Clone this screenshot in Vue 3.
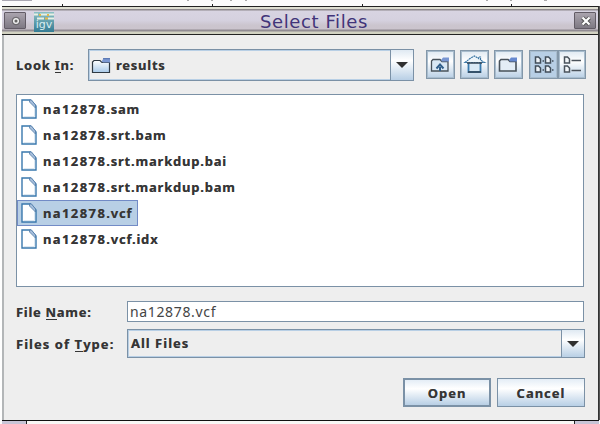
<script setup>
import { ref } from 'vue'
const files = [
  'na12878.sam',
  'na12878.srt.bam',
  'na12878.srt.markdup.bai',
  'na12878.srt.markdup.bam',
  'na12878.vcf',
  'na12878.vcf.idx'
]
const selected = ref('na12878.vcf')
const stem = (file) => file.slice(0, file.indexOf('.'))
const extension = (file) => file.slice(file.indexOf('.'))
</script>

<template>
  <div class="screen">
    <svg class="behind" width="600" height="6" viewBox="0 0 600 6">
      <path d="M2 .5h30" stroke="#aaa8b2" />
      <path d="M62.5 4v2M212.5 4v2M362.5 4v2M511.5 4v2" stroke="#222" />
      <path d="M187 .5h2M211 .5h2M230 .5h2M245 .5h2M486 .5h2M510 .5h2M544 .5h3" stroke="#aaa" />
    </svg>
    <div class="middle">
      <div class="window">
        <header class="titlebar">
          <button class="wm"><svg width="22" height="16" viewBox="0 0 22 16"><circle cx="11" cy="8" r="2.3" fill="#666" stroke="#eee" stroke-width="1.5" /><circle cx="11" cy="8" r="3.8" fill="none" stroke="#555" stroke-width=".7" /></svg></button>
          <span class="logo">
            <svg width="20" height="8" viewBox="0 0 20 8"><path d="M0 2.5h4M6 2.5h14M3 6.5h7M14 6.5h6" stroke="#e7f0e4" stroke-width="2" /><path d="M5 3h2M13 3h2M11 6.5h3" stroke="#e5b94b" stroke-width="2" /></svg>
            <b>igv</b>
          </span>
          <h1>Select Files</h1>
          <button class="wm close"><svg width="22" height="16" viewBox="0 0 22 16"><path d="M7.5 4.7l7 6.8M14.5 4.7l-7 6.8" stroke="#555" stroke-width="4" /><path d="M7.5 4.5l7 7M14.5 4.5l-7 7" stroke="#fff" stroke-width="2.2" /></svg></button>
        </header>
        <main>
          <div class="look">
            <label class="look-label">Look <u>I</u>n:</label>
            <div class="combo location">
              <svg class="folder" width="20" height="17" viewBox="0 0 20 17"><path d="M1.5 15.5V5l1.5-1.5h6l2 2h7.5v10z" fill="url(#folderFill)" stroke="#303a43" stroke-width="1.2" /><path d="M10.5 4.5l2-3H19v4h-7z" fill="#7c98d2" /><path d="M12 1.7h7" stroke="#4a6aac" /><defs><linearGradient id="folderFill" x2="0" y2="1"><stop stop-color="#fff" /><stop offset="1" stop-color="#a9cae9" /></linearGradient></defs></svg>
              <span class="results">results</span>
              <span class="arrow"><svg width="12" height="6" viewBox="0 0 12 6"><path d="M0 0h12L6 6z" fill="#303030" /></svg></span>
            </div>
            <div class="tools">
              <button class="tool"><svg width="27" height="27" viewBox="0 0 27 27"><path d="M4.5 20V10L6 8.5h7l2 2h6V20z" fill="#d9e8f5" stroke="#47515a" stroke-width="1.3" /><path d="M14 9l2-2.5h6v4h-7z" fill="#7896d2" /><path d="M13 20v-4M9.5 17.5L13 13.5l3.5 4" fill="none" stroke="#315f8b" stroke-width="2" /></svg></button>
              <button class="tool"><svg width="27" height="27" viewBox="0 0 27 27"><path d="M7.5 11.5v9.5h12v-9.5" fill="#d9e9f5" stroke="#3879ad" stroke-width="1.8" /><path d="M4 11.5l5-4L13.5 5l4 2.5V6h2v3l4 2.5z" fill="#edf5fa" stroke="#3975a4" stroke-width="1.2" stroke-dasharray="2 .6" /><path d="M6 12h15M7 21h13" stroke="#354655" stroke-width="1.3" /></svg></button>
              <button class="tool"><svg width="27" height="27" viewBox="0 0 27 27"><path d="M4.5 20V10L6 8.5h7l2 2h6V20z" fill="#e3edf6" stroke="#47515a" stroke-width="1.6" /><path d="M14 9l2-2.5h6v4h-7z" fill="#6689cf" /></svg></button>
              <div class="views">
                <button class="tool active"><svg width="27" height="27" viewBox="0 0 27 27"><g fill="#eef3f8" stroke="#414e5a" stroke-width="1.5"><path d="M5.5 6h3l2 2v4h-5zM15.5 6h3l2 2v4h-5zM5.5 15h3l2 2v4h-5zM15.5 15h3l2 2v4h-5z" /></g><path d="M12.5 10h1.5M22 10h1.5M12.5 19h1.5M22 19h1.5" stroke="#414e5a" stroke-width="1.4" /></svg></button>
                <button class="tool list"><svg width="27" height="27" viewBox="0 0 27 27"><path d="M5.5 6h3l2 2v4h-5zM5.5 15h3l2 2v4h-5z" fill="#f4f7fa" stroke="#4a535c" stroke-width="1.5" /><path d="M12.5 9.5H22M12.5 19.5H22" stroke="#4b535b" stroke-width="1.4" /></svg></button>
              </div>
            </div>
          </div>

          <ul class="files">
            <li v-for="file in files" :key="file" :class="{ selected: selected === file }" @click="selected = file">
              <svg width="16" height="20" viewBox="0 0 16 20"><path d="M1 1h8.5L15 7v12H1z" fill="#fff" stroke="#3978ad" stroke-width="1.4" /><path d="M2.5 17.5h11V8" fill="none" stroke="#dce8f2" /><path d="M8.5 1h2l4 5v3L8.5 3z" fill="#a7bedb" stroke="#517ca8" stroke-width=".8" /></svg>
              <span><span class="stem">{{ stem(file) }}</span>{{ extension(file) }}</span>
            </li>
          </ul>

          <div class="row name"><label class="l-name">File <u>N</u>ame:</label><input :value="selected" spellcheck="false" /></div>
          <div class="row type">
            <label class="l-type">Files of <u>T</u>ype:</label>
            <div class="combo"><span class="all">All Files</span><span class="arrow"><svg width="12" height="6" viewBox="0 0 12 6"><path d="M0 0h12L6 6z" fill="#303030" /></svg></span></div>
          </div>
          <footer><button class="action open">Open</button><button class="action">Cancel</button></footer>
        </main>
      </div>
    </div>
    <div class="bottom"><i></i><i></i></div>
  </div>
</template>

<style>
body { overflow: hidden; background: #fbfbfb; }
</style>

<style scoped>
* { box-sizing: border-box; }
.screen { width: 600px; height: 424px; font-family: "Noto Sans", sans-serif; font-size: 13px; font-weight: 700; color: #353535; }
.behind { display: block; height: 6px; background: #fbfbfb; }
.middle { height: 414px; padding-left: 2px; background: linear-gradient(90deg, #fff 2px, #555 2px); }
.window { width: 597px; height: 414px; background: #eee; border-top: 1px solid #222; border-right: 1px solid #333; }
.titlebar { height: 28px; display: flex; align-items: center; border-top: 2px solid #deded1; border-bottom: 1px solid #222; background: linear-gradient(#8e898d 0 1px, #d8d4e2 2px, #d5d1df 45%, #cbc5ce 65%, #cbc4cd 20px, #918b92 21px 22px, #d2d2c2 23px); padding: 0 2px; }
.wm { width: 22px; height: 17px; padding: 0; border: 1px solid #625c66; border-radius: 1px; background: linear-gradient(#aaa4ae, #7e7983); display: grid; place-items: center; margin-bottom: 2px; }
.wm svg { display: block; flex: none; }
.logo { width: 20px; height: 20px; margin-left: 8px; display: block; overflow: hidden; background: linear-gradient(#8cc0c4, #347b94); color: #d9edf0; }
.logo svg { display: block; }
.logo b { display: block; font: 11px/10px "DejaVu Sans", sans-serif; text-align: center; }
h1 { margin: 0 0 0 206px; font: 400 18px/22px "DejaVu Sans", sans-serif; letter-spacing: .6px; color: #413479; white-space: nowrap; }
.close { margin-left: auto; }
main { height: 385px; border-left: 2px solid #b3b6b8; padding: 14px 13px 0 12px; }
.look { height: 32px; display: flex; align-items: center; }
label, .combo, .files, .action { text-shadow: 0 0 .4px #777; }
label { white-space: nowrap; flex: none; }
u { text-decoration: none; border-bottom: 1px solid #353535; line-height: 14px; display: inline-block; }
.look-label { width: 72px; letter-spacing: .75px; }
.l-name { letter-spacing: .7px; }
.l-type { letter-spacing: 1.05px; }
.combo { height: 29px; border: 1px solid #7b91a6; box-shadow: inset 0 0 0 1px #b8cfe5; display: flex; align-items: center; flex: 1; }
.location { width: 326px; height: 32px; flex: none; }
.folder { margin-left: 2px; margin-right: 5px; }
.results { letter-spacing: .75px; }
.arrow { margin-left: auto; align-self: stretch; width: 23px; border-left: 1px solid #7b91a6; display: grid; place-items: center; background: linear-gradient(#dfe9f2, #fff 35%, #b8cfe5); }
.tools { display: flex; margin-left: 12px; margin-bottom: 1px; gap: 5px; }
.tool { width: 29px; height: 29px; padding: 0; border: 1px solid #8397a9; box-shadow: inset 0 0 0 1px #a8bccd; background: linear-gradient(#dfe9f2, #fff 38%, #b8cfe5); display: grid; place-items: center; flex: none; }
.tool svg { display: block; }
.tool.list { width: 28px; }
.views { display: flex; margin-left: 1px; }
.tool.active { background: #b8cfe5; }
.files { margin: 13px 0 0; width: 568px; height: 193px; border: 1px solid #7b91a6; background: #fff; padding: 1px 0; list-style: none; }
li { height: 26px; width: max-content; padding: 0 5px 0 3px; display: flex; align-items: center; gap: 6px; letter-spacing: .8px; border: 1px solid transparent; cursor: default; }
.stem { letter-spacing: 1.4px; }
.selected { background: #b8cfe5; border-color: #728bc6; }
.row { display: flex; align-items: center; }
.row label { width: 111px; }
.name { height: 21px; margin-top: 14px; }
input { width: 457px; height: 21px; padding: 0 2px; border: 1px solid #7b91a6; outline: 0; background: #fff; color: #444; font: 400 14px "Noto Sans", sans-serif; letter-spacing: .65px; }
.type { height: 29px; margin-top: 7px; }
.all { padding: 0 0 2px 3px; letter-spacing: 1px; }
footer { margin-top: 20px; display: flex; justify-content: flex-end; gap: 6px; }
.action { width: 88px; height: 29px; border: 1px solid #7b91a6; padding: 0; background: linear-gradient(#e4edf6, #fff 35%, #b8cfe5); color: #353535; font: 700 13px "Noto Sans", sans-serif; letter-spacing: 1px; }
.action.open { border-width: 2px; }
.bottom { height: 4px; margin-left: 2px; width: 597px; border-top: 1px solid #111; background: #f9f7f5; display: flex; justify-content: space-between; }
.bottom i { width: 25px; background: #c8c4d6; border-right: 1px solid #222; }
.bottom i:last-child { border-right: 0; border-left: 1px solid #222; }
</style>
